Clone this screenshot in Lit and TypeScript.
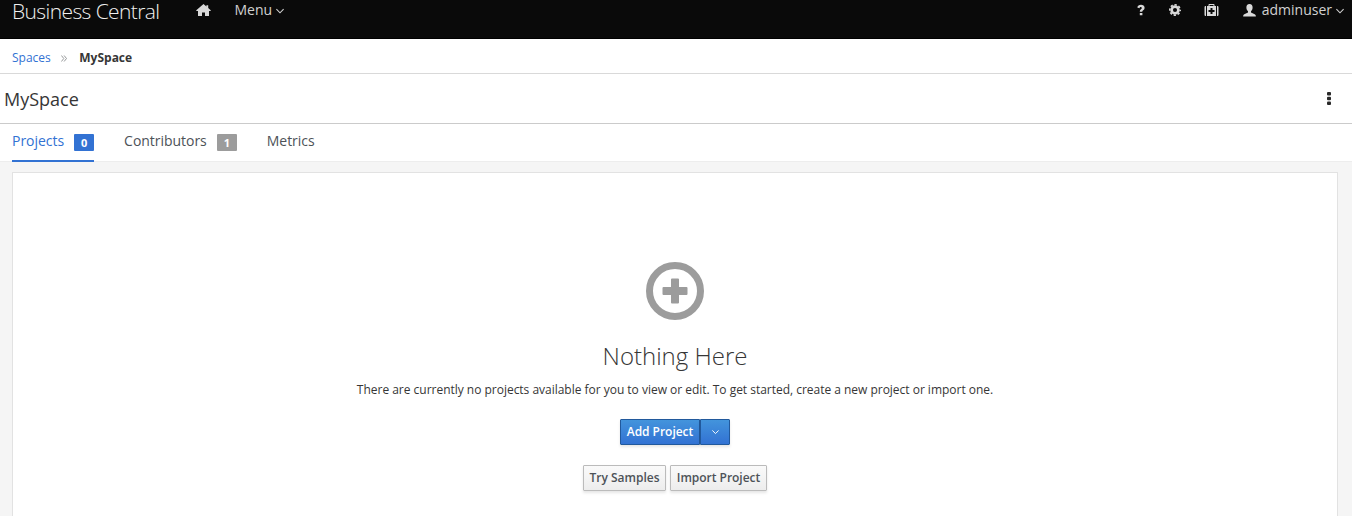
import { LitElement, html, css } from "lit";
import { customElement } from "lit/decorators.js";

@customElement("app-root")
export class AppRoot extends LitElement {
  static styles = css`
    :host {
      display: flex;
      flex-direction: column;
      height: 516px;
      overflow: hidden;
      box-sizing: border-box;
      background: #f5f5f5;
      color: #363636;
      font: 12px/20px "Open Sans", sans-serif;
    }
    * { box-sizing: border-box; }
    svg { display: block; flex: none; }
    .nav {
      flex: none;
      display: flex;
      height: 39px;
      padding: 0 8px 0 13px;
      background: #0a0a0a;
      border-bottom: 1px solid #000;
      color: #d1d1d1;
      font-size: 14px;
    }
    .brand { width: 183px; margin-left: -1px; color: #f0f0f0; font-size: 21px; font-weight: 300; line-height: 23px; white-space: nowrap; letter-spacing: -0.6px; }
    .home { margin: 4px 0 0 1px; }
    .menu { display: flex; margin-left: 23.5px; letter-spacing: -0.02px; }
    .menu svg { margin: 8px 0 0 4px; }
    .tools { display: flex; margin-left: auto; }
    .help { margin: 4px 0 0; }
    .gear { margin: 4px 0 0 24px; }
    .kit { margin: 4px 0 0 23px; }
    .user { margin: 4px 6px 0 24px; }
    .tools .caret { margin: 8px 0 0 4px; }
    .crumbs {
      flex: none;
      display: flex;
      align-items: center;
      height: 35px;
      padding: 3px 12px 0;
      background: #fff;
      border-bottom: 1px solid #d9d9d9;
    }
    .crumbs a { color: #3272d3; letter-spacing: -0.02px; }
    .crumbs svg { margin: 1px 12px 0 10px; }
    .crumbs b { margin-left: 0.6px; font-weight: 700; }
    .title {
      flex: none;
      display: flex;
      justify-content: space-between;
      align-items: center;
      height: 50px;
      padding: 0 21px 0 4px;
      background: #fff;
      border-bottom: 1px solid #cbcbcb;
      font-size: 18px;
    }
    .tabs {
      flex: none;
      display: flex;
      gap: 30px;
      height: 38px;
      padding: 0 12px;
      background: #fff;
      border-bottom: 1px solid #ededed;
      color: #4d5258;
      font-size: 14px;
      letter-spacing: -0.03px;
    }
    .tab { display: flex; height: 38px; padding-top: 7px; }
    .active { color: #3272d3; border-bottom: 2px solid #3272d3; }
    .badge {
      width: 20px;
      height: 17px;
      margin: 3px 0 0 10px;
      background: #9c9c9c;
      border-radius: 1px;
      color: #fff;
      font-size: 11px;
      font-weight: 700;
      line-height: 18px;
      text-align: center;
    }
    .active .badge { background: #3272d3; }
    .card {
      flex: 1;
      display: flex;
      flex-direction: column;
      align-items: center;
      margin: 10px 14px 0 12px;
      padding-top: 89px;
      background: #fff;
      border: 1px solid #e2e2e2;
      border-bottom: 0;
      border-radius: 1px 1px 0 0;
    }
    h1 { margin: 22px 0 0; font-size: 24px; font-weight: 300; line-height: 28px; }
    p { margin: 10px 0 0; line-height: 20px; letter-spacing: -0.018px; }
    .row { display: flex; margin-top: 19px; }
    .secondary { gap: 4px; margin-top: 20px; }
    button {
      display: flex;
      align-items: center;
      justify-content: center;
      height: 26px;
      padding: 0;
      border: 1px solid #bbb;
      border-radius: 1px;
      background: linear-gradient(#fafafa, #ededed);
      box-shadow: 0 2px 3px rgba(3, 3, 3, 0.1);
      color: #4d5258;
      font: 600 12px/20px "Open Sans", sans-serif;
      white-space: nowrap;
    }
    .primary { border-color: #21599c; background: linear-gradient(#4394dc, #3272d3); color: #fff; }
    .add { width: 80px; border-radius: 1px 0 0 1px; letter-spacing: -0.03px; }
    .drop { width: 30px; border-radius: 0 1px 1px 0; }
    .samples { width: 83px; }
    .import { width: 97px; letter-spacing: -0.02px; }
  `;

  private caret(size = 8) {
    return html`<svg class="caret" width=${size} height="6" viewBox="0 0 8 6" fill="none" stroke="currentColor" stroke-width="1.1"><path d="M.4 1.200 4 4.800 7.600 1.200" /></svg>`;
  }

  render() {
    return html`
      <div class="nav">
        <div class="brand">Business Central</div>
        <svg class="home" width="15" height="13" viewBox="0 0 15 13" fill="#d9d9d9"><path d="M7.5 0 .3 6.3V7H2v4.9h4V8.5h3v3.4h4V7h1.7v-.7L12.2 4V1.2h-1.8v1.2z" /></svg>
        <div class="menu">Menu${this.caret()}</div>
        <div class="tools">
          <svg class="help" width="8" height="12" viewBox="0 0 8 12" fill="#d9d9d9"><path d="M.3 3.6C.7 1.6 2 .8 4 .8c2 0 3.600 1.100 3.600 2.900 0 2.400-2.300 2.300-2.300 4.100H2.800c0-2.700 2-2.600 2-3.900 0-.6-.4-.9-1-.9-.8 0-1.100.5-1.400 1.200zM2.800 9h2.600v2.300H2.800z" /></svg>
          <svg class="gear" width="12" height="12" viewBox="0 0 12 12"><g fill="none" stroke="#d9d9d9"><circle cx="6" cy="6" r="3.400" stroke-width="2.700" /><circle cx="6" cy="6" r="5.200" stroke-width="1.600" stroke-dasharray="2.300 1.784" stroke-dashoffset="1.150" /></g></svg>
          <svg class="kit" width="15" height="12" viewBox="0 0 15 12"><path fill="#d9d9d9" fill-rule="evenodd" d="M2 2v10h-.4Q.5 12 .5 10.700V3.300Q.5 2 1.600 2zM13 2h.4q1.100 0 1.100 1.300v7.400q0 1.300-1.100 1.300H13zM3 2h1.500V.8q0-.8.8-.8h4.400q.8 0 .8.800V2H12v10H3zM5.500 2h4V1h-4zM6.500 4v2h-2v2h2v2h2V8h2V6h-2V4z" /></svg>
          <svg class="user" width="13" height="13" viewBox="0 0 13 13" fill="#d9d9d9"><path d="M6.5 0C8.7 0 9.6 1.4 9.6 3.6 9.6 5.3 8.9 6.7 8 7.3v1.2l3.7 1.7q1.2.6 1.2 2.3H.1q0-1.7 1.2-2.3L5 8.5V7.3C4.100 6.700 3.400 5.300 3.400 3.600 3.400 1.400 4.300 0 6.500 0z" /></svg>
          <span>adminuser</span>${this.caret()}
        </div>
      </div>
      <div class="crumbs">
        <a>Spaces</a>
        <svg width="6" height="7" viewBox="0 0 6 7" fill="none" stroke="#8b8d8f" stroke-width=".9"><path d="m.4.5 2.400 3-2.400 3M3.100.5l2.400 3-2.400 3" /></svg>
        <b>MySpace</b>
      </div>
      <div class="title">
        <span>MySpace</span>
        <svg width="4" height="13" viewBox="0 0 4 13" fill="#292929"><rect width="4" height="3.600" rx="1" /><rect y="4.700" width="4" height="3.600" rx="1" /><rect y="9.400" width="4" height="3.600" rx="1" /></svg>
      </div>
      <div class="tabs">
        <div class="tab active">Projects<span class="badge">0</span></div>
        <div class="tab">Contributors<span class="badge">1</span></div>
        <div class="tab">Metrics</div>
      </div>
      <div class="card">
        <svg width="58" height="58" viewBox="0 0 58 58"><circle cx="29" cy="29" r="25.500" fill="none" stroke="#9c9c9c" stroke-width="7" /><path fill="#9c9c9c" d="M26 16.500h6q1 0 1 1V25h7.500q1 0 1 1v6q0 1-1 1H33v7.500q0 1-1 1h-6q-1 0-1-1V33h-7.500q-1 0-1-1v-6q0-1 1-1H25v-7.500q0-1 1-1z" /></svg>
        <h1>Nothing Here</h1>
        <p>There are currently no projects available for you to view or edit. To get started, create a new project or import one.</p>
        <div class="row">
          <button class="primary add">Add Project</button>
          <button class="primary drop" aria-label="More">${this.caret(7)}</button>
        </div>
        <div class="row secondary">
          <button class="samples">Try Samples</button>
          <button class="import">Import Project</button>
        </div>
      </div>
    `;
  }
}
